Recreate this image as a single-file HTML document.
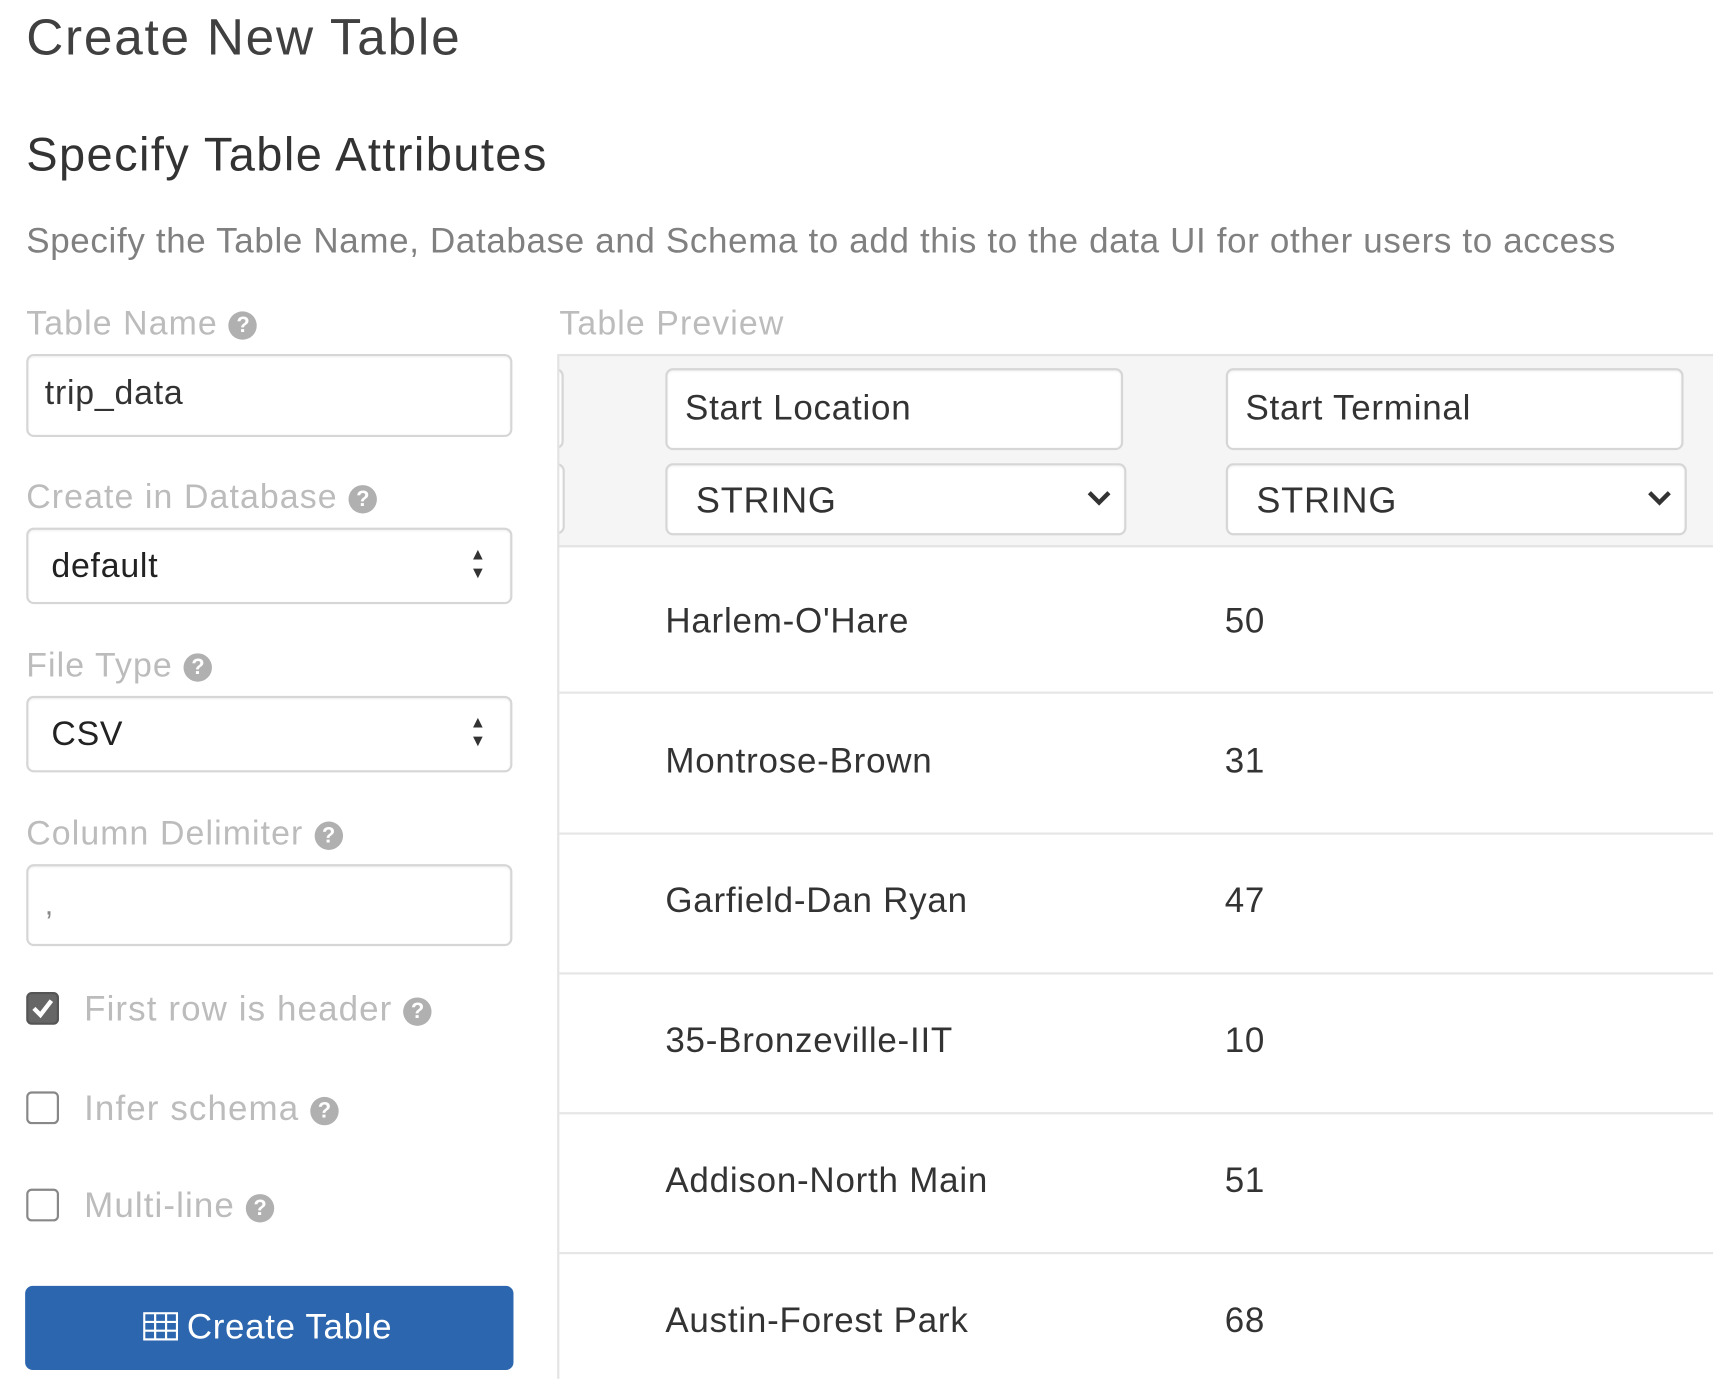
<!DOCTYPE html>
<html><head><meta charset="utf-8"><style>
html,body{margin:0;padding:0;background:#fff;overflow:hidden;width:1713px;height:1379px}
#w{position:absolute;left:0;top:0;width:1568px;height:1262px;transform:scale(1.0925);transform-origin:0 0;font-family:"Liberation Sans",Arial,sans-serif;}
.a{position:absolute;white-space:nowrap}
.box{position:absolute;border:2px solid #d6d6d6;border-radius:7px;background:#fff;box-sizing:border-box;box-shadow:inset 0 1px 2px rgba(0,0,0,.06)}
.lbl{color:#bcbcbc;font-size:31px;letter-spacing:1px}
.q{display:inline-block;width:26px;height:26px;border-radius:50%;background:#b0b0b0;color:#fff;font-size:20px;font-weight:bold;text-align:center;line-height:26px;vertical-align:2px;margin-left:10px;letter-spacing:0}
.t{color:#333;font-size:32px;letter-spacing:0.7px}
.hr{position:absolute;left:511px;right:0;height:2px;background:#e6e6e6}
.cb{position:absolute;left:24px;width:30px;height:30px;border:2px solid #888;border-radius:5px;box-sizing:border-box;background:#fff}
</style></head><body><div id="w">
<div class="a" style="left:24px;top:6px;font-size:47px;color:#404040;letter-spacing:1.6px">Create New Table</div>
<div class="a" style="left:24px;top:118px;font-size:43px;color:#333;letter-spacing:1.3px">Specify Table Attributes</div>
<div class="a" style="left:24px;top:202px;font-size:32px;color:#808080;letter-spacing:0.6px">Specify the Table Name, Database and Schema to add this to the data UI for other users to access</div>

<div class="a lbl" style="left:24px;top:278px">Table Name<span class="q">?</span></div>
<div class="box" style="left:24px;top:324px;width:445px;height:76px"></div>
<div class="a t" style="left:41px;top:342px;font-size:31px">trip_data</div>

<div class="a lbl" style="left:24px;top:437px">Create in Database<span class="q">?</span></div>
<div class="box" style="left:24px;top:483px;width:445px;height:70px"></div>
<div class="a t" style="left:47px;top:500px;font-size:31px;color:#222">default</div>
<div class="a" style="left:430px;top:499px;font-size:15px;line-height:17px;color:#333">▲<br>▼</div>

<div class="a lbl" style="left:24px;top:591px">File Type<span class="q">?</span></div>
<div class="box" style="left:24px;top:637px;width:445px;height:70px"></div>
<div class="a t" style="left:47px;top:654px;font-size:31px;color:#222">CSV</div>
<div class="a" style="left:430px;top:653px;font-size:15px;line-height:17px;color:#333">▲<br>▼</div>

<div class="a lbl" style="left:24px;top:745px">Column Delimiter<span class="q">?</span></div>
<div class="box" style="left:24px;top:791px;width:445px;height:75px"></div>
<div class="a t" style="left:41px;top:812px;font-size:28px;color:#888">,</div>

<div class="cb" style="top:908px;background:#666;border-color:#555"><svg width="26" height="26" viewBox="0 0 26 26" style="position:absolute;left:0;top:0"><path d="M5 13 L11 19 L21 6" stroke="#fff" stroke-width="4" fill="none"/></svg></div>
<div class="a lbl" style="left:77px;top:905px;font-size:32px">First row is header<span class="q">?</span></div>
<div class="cb" style="top:999px"></div>
<div class="a lbl" style="left:77px;top:996px;font-size:32px">Infer schema<span class="q">?</span></div>
<div class="cb" style="top:1088px"></div>
<div class="a lbl" style="left:77px;top:1085px;font-size:32px">Multi-line<span class="q">?</span></div>

<div class="a" style="left:23px;top:1177px;width:447px;height:77px;background:#2c66ae;border-radius:7px"></div>
<div class="a" style="left:131px;top:1196px;font-size:32px;color:#fff;letter-spacing:0.6px"><svg width="32" height="26" viewBox="0 0 32 26" style="vertical-align:-2px;margin-right:8px"><rect x="1" y="1" width="30" height="24" fill="none" stroke="#fff" stroke-width="2"/><path d="M1 9H31M1 17H31M11 1V25M21 1V25" stroke="#fff" stroke-width="2"/></svg>Create Table</div>

<div class="a lbl" style="left:512px;top:278px">Table Preview</div>
<div class="a" style="left:511px;top:324px;right:0;height:177px;background:#f5f5f5;border-top:2px solid #e3e3e3;border-bottom:2px solid #e3e3e3;box-sizing:border-box;overflow:hidden">
  <div class="box" style="left:-41px;top:11px;width:46px;height:74px"></div>
  <div class="box" style="left:-41px;top:98px;width:47px;height:65px"></div>
</div>
<div class="a" style="left:510px;top:324px;width:2px;height:938px;background:#e3e3e3"></div>
<div class="box" style="left:609px;top:337px;width:419px;height:75px"></div>
<div class="a t" style="left:627px;top:355px;font-size:32px">Start Location</div>
<div class="box" style="left:1122px;top:337px;width:419px;height:75px"></div>
<div class="a t" style="left:1140px;top:355px;font-size:32px">Start Terminal</div>
<div class="box" style="left:609px;top:424px;width:422px;height:66px"></div>
<div class="a t" style="left:637px;top:439px;font-size:33px">STRING</div>
<svg class="a" style="left:994px;top:448px" width="24" height="16" viewBox="0 0 24 16"><path d="M3 3 L12 12 L21 3" stroke="#333" stroke-width="4" fill="none"/></svg>
<div class="box" style="left:1122px;top:424px;width:422px;height:66px"></div>
<div class="a t" style="left:1150px;top:439px;font-size:33px">STRING</div>
<svg class="a" style="left:1507px;top:448px" width="24" height="16" viewBox="0 0 24 16"><path d="M3 3 L12 12 L21 3" stroke="#333" stroke-width="4" fill="none"/></svg>

<div class="hr" style="top:633px"></div>
<div class="hr" style="top:762px"></div>
<div class="hr" style="top:890px"></div>
<div class="hr" style="top:1018px"></div>
<div class="hr" style="top:1146px"></div>

<div class="a t" style="left:609px;top:550px">Harlem-O'Hare</div><div class="a t" style="left:1121px;top:550px">50</div>
<div class="a t" style="left:609px;top:678px">Montrose-Brown</div><div class="a t" style="left:1121px;top:678px">31</div>
<div class="a t" style="left:609px;top:806px">Garfield-Dan Ryan</div><div class="a t" style="left:1121px;top:806px">47</div>
<div class="a t" style="left:609px;top:934px">35-Bronzeville-IIT</div><div class="a t" style="left:1121px;top:934px">10</div>
<div class="a t" style="left:609px;top:1062px">Addison-North Main</div><div class="a t" style="left:1121px;top:1062px">51</div>
<div class="a t" style="left:609px;top:1190px">Austin-Forest Park</div><div class="a t" style="left:1121px;top:1190px">68</div>
</div></body></html>
